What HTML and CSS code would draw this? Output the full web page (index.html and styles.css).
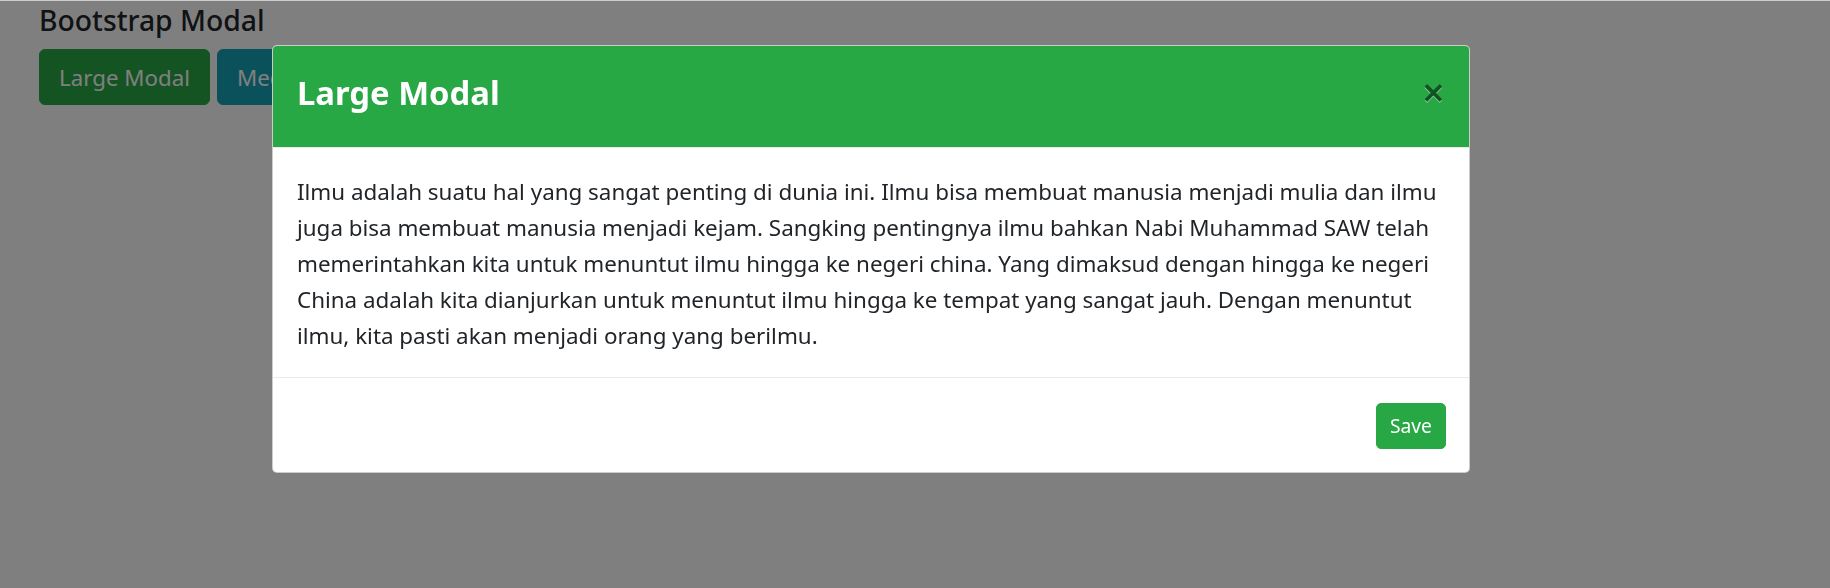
FILE: index.html
```html
<!DOCTYPE html>
<html lang="id">
<head>
<meta charset="utf-8">
<title>Bootstrap Modal</title>
<link rel="stylesheet" href="styles.css">
</head>
<body>
<div class="page">
  <h2 class="page-title">Bootstrap Modal</h2>
  <div class="actions">
    <button class="btn btn-success">Large Modal</button>
    <button class="btn btn-info">Medium Modal</button>
  </div>
</div>

<div class="backdrop"></div>

<div class="modal">
  <div class="modal-content">
    <div class="modal-header">
      <h4 class="modal-title">Large Modal</h4>
      <button class="close" type="button" aria-label="Close">&times;</button>
    </div>
    <div class="modal-body">
      <p>Ilmu adalah suatu hal yang sangat penting di dunia ini. Ilmu bisa membuat manusia menjadi mulia dan ilmu juga bisa membuat manusia menjadi kejam. Sangking pentingnya ilmu bahkan Nabi Muhammad SAW telah memerintahkan kita untuk menuntut ilmu hingga ke negeri china. Yang dimaksud dengan hingga ke negeri China adalah kita dianjurkan untuk menuntut ilmu hingga ke tempat yang sangat jauh. Dengan menuntut ilmu, kita pasti akan menjadi orang yang berilmu.</p>
    </div>
    <div class="modal-footer">
      <button class="btn-save" type="button">Save</button>
    </div>
  </div>
</div>
</body>
</html>
```
FILE: styles.css
```css
* { box-sizing: border-box; }

html, body {
  margin: 0;
  height: 100%;
}

body {
  font-family: "Noto Sans", "Open Sans", sans-serif;
  color: #212529;
  background: #fff;
  overflow: hidden;
}

.page {
  padding: 2px 39px 0;
}

.page-title {
  margin: 0 0 11px;
  font-size: 28.3px;
  font-weight: 500;
  line-height: 36px;
}

.actions {
  display: flex;
  gap: 7px;
}

.btn {
  font-family: inherit;
  font-size: 22.3px;
  line-height: 36px;
  padding: 10px 19px 8px;
  border: 1px solid transparent;
  border-radius: 6px;
  color: #fff;
  cursor: pointer;
}

.btn-success { background: #28a745; border-color: #28a745; }
.btn-info { background: #17a2b8; border-color: #17a2b8; }

.backdrop {
  position: fixed;
  inset: 0;
  background: rgba(0, 0, 0, 0.5);
  box-shadow: inset 0 1px 0 rgba(255, 255, 255, 0.6);
}

.modal {
  position: absolute;
  top: 45px;
  left: 272px;
  width: 1198px;
}

.modal-content {
  background: #fff;
  border: 1px solid rgba(0, 0, 0, 0.2);
  border-radius: 5px;
  overflow: hidden;
}

.modal-header {
  display: flex;
  align-items: flex-start;
  justify-content: space-between;
  padding: 20px 24px 27px;
  background: #28a745;
  border-bottom: 1px solid #e9ecef;
}

.modal-title {
  margin: 0;
  color: #fff;
  font-size: 32.8px;
  font-weight: 700;
  line-height: 54px;
}

.close {
  margin-top: 6px;
  padding: 0;
  border: 0;
  background: transparent;
  font-family: inherit;
  font-size: 40px;
  font-weight: 600;
  line-height: 40px;
  color: #000;
  text-shadow: 0 1px 0 #fff;
  opacity: 0.5;
  cursor: pointer;
}

.modal-body {
  padding: 26px 24px 23px;
}

.modal-body p {
  margin: 0;
  font-size: 22.4px;
  line-height: 36px;
}

.modal-footer {
  display: flex;
  justify-content: flex-end;
  padding: 25px 23px 23px;
  border-top: 1px solid #e9ecef;
}

.btn-save {
  font-family: inherit;
  font-size: 19.3px;
  line-height: 32px;
  padding: 6px 13px;
  color: #fff;
  background: #28a745;
  border: 1px solid #28a745;
  border-radius: 5px;
  cursor: pointer;
}
```
